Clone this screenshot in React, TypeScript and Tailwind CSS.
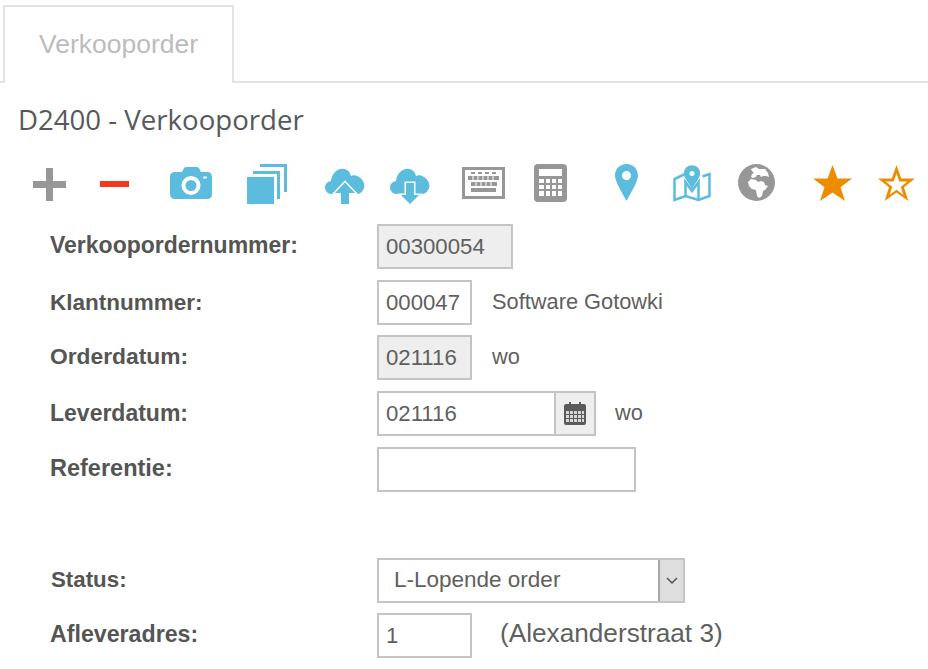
const BLUE = "#5bbcdd";
const GRAY = "#979797";
const ORANGE = "#ee8c00";
const CLOUD = "M7 26a6.500 6.500 0 0 1-1-13C7 4 15-2 22 2c2 1 3 3 4 6 2-1 5-1 8 1 5 3 7 9 4 13-1 2-3 4-6 4z";
const ARROW_UP = "M20 14.500L30 25h-6v11h-8V25H10z";
const ARROW_DOWN = "M16 15h8v12h5L20 36l-9-9h5z";

function Toolbar() {
  return (
    <div className="flex items-start h-[40px] mt-[27px] pl-[33px]">
      {/* plus */}
      <svg width="33" height="33" viewBox="0 0 33 33" className="mt-[4px]">
        <path d="M13 0h7v13h13v7H20v13h-7V20H0v-7h13z" fill={GRAY} />
      </svg>
      {/* minus */}
      <svg width="29" height="6" viewBox="0 0 29 6" className="ml-[34px] mt-[17px]">
        <rect width="29" height="6" fill="#f5391c" />
      </svg>
      {/* camera */}
      <svg width="42" height="32" viewBox="0 0 42 32" className="ml-[41px] mt-[3px]">
        <path
          fillRule="evenodd"
          d="M5 5h7l2-4q1-1 3-1h9q2 0 3 1l2 4h6q5 0 5 5v17q0 5-5 5H5q-5 0-5-5V10q0-5 5-5zM21 9a9.5 9.5 0 1 0 0 19a9.500 9.500 0 0 0 0-19zM34 9.500a1 1 0 0 0 0 2h2a1 1 0 0 0 0-2z"
          fill={BLUE}
        />
        <circle cx="21" cy="18.500" r="5.500" fill={BLUE} />
      </svg>
      {/* copies */}
      <svg width="40" height="40" viewBox="0 0 40 40" className="ml-[35px]">
        <path d="M13 0h27v28h-3V3H13z" fill={BLUE} />
        <path d="M6 7h27v28h-3V10H6z" fill={BLUE} />
        <rect x="0" y="13" width="27" height="27" fill={BLUE} />
      </svg>
      {/* cloud up */}
      <svg width="40" height="36" viewBox="0 0 40 36" className="ml-[38px] mt-[4px]">
        <path d={CLOUD} fill={BLUE} />
        <path d={ARROW_UP} fill="#fff" stroke="#fff" strokeWidth="3" />
        <path d={ARROW_UP} fill={BLUE} />
      </svg>
      {/* cloud down */}
      <svg width="40" height="36" viewBox="0 0 40 36" className="ml-[25px] mt-[4px]">
        <path d={CLOUD} fill={BLUE} />
        <path d={ARROW_DOWN} fill="#fff" stroke="#fff" strokeWidth="3" />
        <path d={ARROW_DOWN} fill={BLUE} />
      </svg>
      {/* keyboard */}
      <svg width="43" height="32" viewBox="0 0 43 32" className="ml-[32px] mt-[3px]">
        <rect x="1.500" y="1.500" width="40" height="29" fill="none" stroke={GRAY} strokeWidth="3" />
        <path d="M9 6h4M16 6h4M23 6h4M30 6h4" stroke={GRAY} strokeWidth="2" />
        <rect x="6" y="9" width="31" height="4" fill={GRAY} />
        <rect x="9" y="15" width="26" height="4" fill={GRAY} />
        <rect x="9" y="21" width="25" height="4" fill={GRAY} />
        <path d="M11 9v4M16 9v4M21 9v4M26 9v4M31 9v4M14 15v4M19 15v4M24 15v4M29 15v4" stroke="#fff" strokeWidth="1" />
      </svg>
      {/* calculator */}
      <svg width="33" height="38" viewBox="0 0 33 38" className="ml-[29px]">
        <rect width="33" height="38" rx="4" fill={GRAY} />
        <rect x="5" y="5" width="23" height="7" fill="#fff" />
        <path
          d="M5 15h5v4H5zM12 15h4v4h-4zM18 15h4v4h-4zM24 15h4v4h-4zM5 21h5v4H5zM12 21h4v4h-4zM18 21h4v4h-4zM24 21h4v4h-4zM5 27h5v5H5zM12 27h4v5h-4zM18 27h4v5h-4zM24 27h4v5h-4z"
          fill="#fff"
        />
      </svg>
      {/* pin */}
      <svg width="23" height="37" viewBox="0 0 23 37" className="ml-[48px]">
        <path
          fillRule="evenodd"
          d="M11.500 0C18 0 23 5 23 11.500c0 6-7 17-11.500 25.500C7 28.500 0 17.500 0 11.500 0 5 5 0 11.500 0zm0 7a4.500 4.500 0 1 0 0 9a4.500 4.500 0 0 0 0-9z"
          fill={BLUE}
        />
      </svg>
      {/* map */}
      <svg width="38" height="37" viewBox="0 0 38 37" className="ml-[35px] mt-[1px]" fill="none" stroke={BLUE} strokeWidth="2.500">
        <path d="M11 9.500L1.500 14v21l11-4 13 4 11-4V9l-7 2.500" />
        <path d="M12.500 31V17l6.500 9 6.500-9v18" />
        <path fill={BLUE} d="M19 1.500c4 0 7 3 7 7 0 3.500-4 8-7 13-3-5-7-9.500-7-13 0-4 3-7 7-7z" />
        <circle cx="19" cy="8.500" r="2.500" fill="#fff" stroke="none" />
      </svg>
      {/* globe */}
      <svg width="37" height="37" viewBox="0 0 37 37" className="ml-[27px]">
        <circle cx="18.500" cy="18.500" r="18.500" fill={GRAY} />
        <path
          d="M13 5l5-2 3 2 6 0 3 4 1 4-3-1-3 0-2 1-1-2-3 0-1 2-3 1-2-1 1-3 2-1-2-2zM10 18l3-3 5 1 2 2 3-1 3 1 1 3 3 1-3 4-2 1-1 5-3 2-2-2-1-6-4-1-3-3z"
          fill="#fff"
        />
      </svg>
      {/* star */}
      <svg width="39" height="36" viewBox="0 0 39 36" className="ml-[38px] mt-[1px]">
        <path d="M19.500 0l5 13.500H39l-11.500 8.700L32 36 19.500 27.500 7 36l4.500-13.800L0 13.500h14.500z" fill={ORANGE} />
      </svg>
      {/* star outline */}
      <svg width="37" height="36" viewBox="0 0 37 36" className="ml-[26px] mt-[1px]">
        <path
          fillRule="evenodd"
          d="M18.500 0l4.700 13.500H37l-11 8.700L30.300 36 18.500 27.500 6.700 36 11 22.200 0 13.500h13.800zm0 8.500l-2.800 8H7.500l6.700 5.200-2.500 8 6.800-4.900 6.800 4.900-2.500-8 6.700-5.200h-8.200z"
          fill={ORANGE}
        />
      </svg>
    </div>
  );
}

function CalendarIcon() {
  return (
    <svg width="22" height="23" viewBox="0 0 22 23">
      <path d="M2 2h3V0h2v2h8V0h2v2h3q2 0 2 2v17q0 2-2 2H2q-2 0-2-2V4q0-2 2-2z" fill="#5a5a5a" />
      <path
        d="M2 9h3v3H2zM6 9h3v3H6zM10 9h3v3h-3zM14 9h3v3h-3zM18 9h2v3h-2zM2 13h3v3H2zM6 13h3v3H6zM10 13h3v3h-3zM14 13h3v3h-3zM18 13h2v3h-2zM2 17h3v3H2zM6 17h3v3H6zM10 17h3v3h-3zM14 17h3v3h-3zM18 17h2v3h-2z"
        fill="#d8d8d8"
      />
    </svg>
  );
}

function Label({ children, className = "" }: { children: string; className?: string }) {
  return <div className={`w-[327px] shrink-0 font-bold text-[#555555] ${className}`}>{children}</div>;
}

const fieldBase = "h-full border-2 border-[#c4c4c4] flex items-center text-[22.200px] text-[#5f5f5f] pl-[7px]";

export default function App() {
  return (
    <div className="w-[928px] h-[669px] overflow-hidden bg-white font-['Liberation_Sans',Arial,sans-serif]">
      <div className="h-[83px] pt-[5px] pl-[3px] border-b-2 border-[#e3e3e3] flex">
        <div className="w-[231px] h-[78px] border-2 border-b-0 border-[#e3e3e3] bg-white flex items-center justify-center text-[26.500px] text-[#bcbcbc]">
          Verkooporder
        </div>
      </div>

      <h1 className="ml-[18px] mt-[19px] h-[35px] leading-[35px] text-[27.600px] text-[#56595c] font-['Open_Sans',sans-serif]">
        D2400 - Verkooporder
      </h1>

      <Toolbar />

      <div className="pl-[50px] mt-[20px]">
        <div className="flex items-center h-[45px]">
          <Label className="text-[23px] -mt-[2px]">Verkoopordernummer:</Label>
          <div className={`${fieldBase} w-[136px] bg-[#eeeeee]`}>00300054</div>
        </div>

        <div className="flex items-center h-[45px] mt-[11px]">
          <Label className="text-[22.500px]">Klantnummer:</Label>
          <div className={`${fieldBase} w-[95px] bg-white`}>000047</div>
          <span className="ml-[20px] text-[21.800px] text-[#5f5f5f]">Software Gotowki</span>
        </div>

        <div className="flex items-center h-[45px] mt-[10px]">
          <Label className="text-[22.800px] -mt-[3px]">Orderdatum:</Label>
          <div className={`${fieldBase} w-[95px] bg-[#eeeeee]`}>021116</div>
          <span className="ml-[20px] text-[21.800px] text-[#5f5f5f]">wo</span>
        </div>

        <div className="flex items-center h-[45px] mt-[11px]">
          <Label className="text-[23px]">Leverdatum:</Label>
          <div className="flex h-full w-[219px] border-2 border-[#c4c4c4]">
            <div className="flex-1 flex items-center pl-[7px] text-[22.200px] text-[#5f5f5f] border-r-2 border-[#c4c4c4]">
              021116
            </div>
            <div className="w-[38px] bg-[#eeeeee] flex items-center justify-center">
              <CalendarIcon />
            </div>
          </div>
          <span className="ml-[19px] text-[21.800px] text-[#5f5f5f]">wo</span>
        </div>

        <div className="flex items-center h-[45px] mt-[11px]">
          <Label className="text-[23.500px] -mt-[2px]">Referentie:</Label>
          <div className={`${fieldBase} w-[259px] bg-white`} />
        </div>

        <div className="flex items-center h-[45px] mt-[66px]">
          <Label className="text-[22.300px] pl-[1px] -mt-[2px]">Status:</Label>
          <div className="flex h-full w-[308px] border-2 border-[#c4c4c4]">
            <div className="flex-1 flex items-center pl-[15px] text-[22.500px] text-[#5f5f5f] -mt-[1px]">
              L-Lopende order
            </div>
            <div className="w-[25px] bg-[#dedede] border-l-2 border-[#a8a8a8] flex items-center justify-center">
              <svg width="12" height="7" viewBox="0 0 12 7" fill="none" stroke="#555555" strokeWidth="1.500">
                <path d="M1 1l5 5 5-5" />
              </svg>
            </div>
          </div>
        </div>

        <div className="flex items-center h-[45px] mt-[10px]">
          <Label className="text-[23.200px] -mt-[3px]">Afleveradres:</Label>
          <div className={`${fieldBase} w-[95px] bg-white`}>1</div>
          <span className="ml-[28px] text-[26.200px] text-[#5f5f5f] -mt-[4px]">(Alexanderstraat 3)</span>
        </div>
      </div>
    </div>
  );
}
